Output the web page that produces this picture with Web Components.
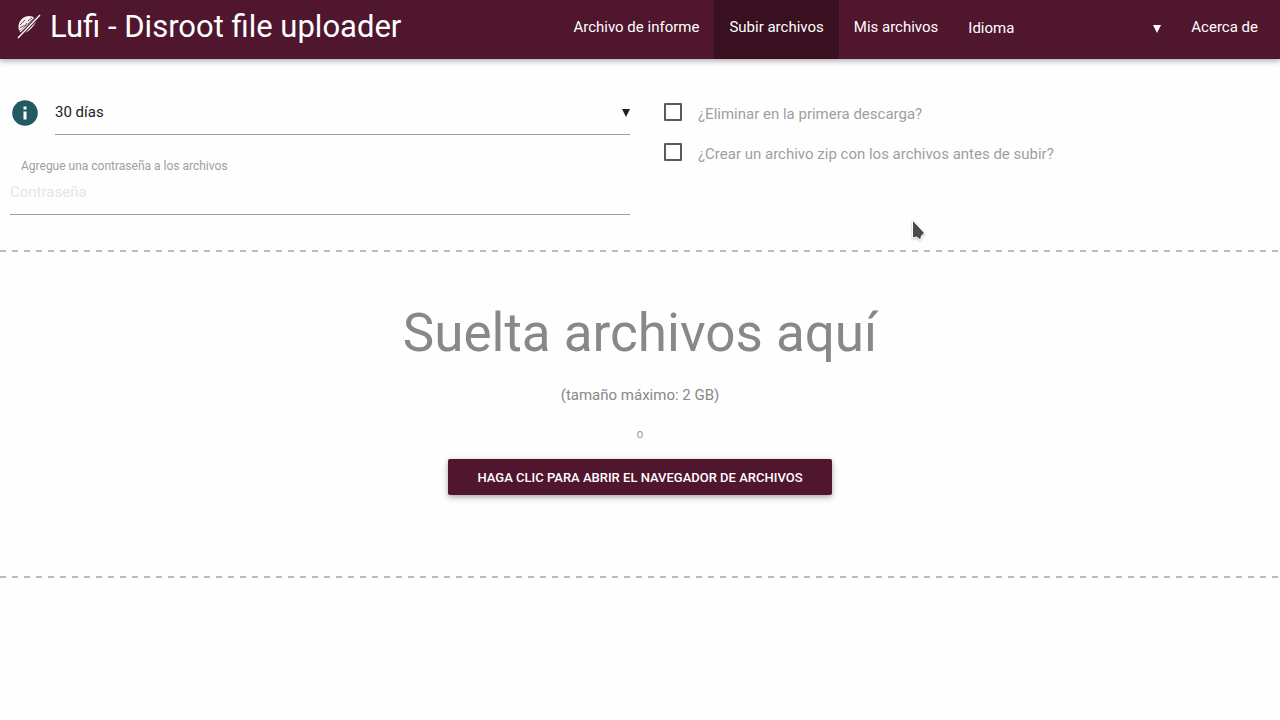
<!DOCTYPE html>
<html lang="es">
<head>
<meta charset="utf-8">
<title>Lufi - Disroot file uploader</title>
<style>
  body { margin: 0; background: #fefefe; color: #212121; font: 15px/22px Roboto, sans-serif; }
</style>
</head>
<body>
<lufi-app></lufi-app>
<script>
const define = (name, html, setup) => customElements.define(name, class extends HTMLElement {
  constructor() {
    super();
    const root = this.attachShadow({ mode: 'open' });
    const template = document.createElement('template');
    template.innerHTML = html;
    root.append(template.content.cloneNode(true));
    if (setup) setup(this, root);
  }
});

define('lufi-logo', `
<style>
  :host { display: block; }
  a { display: flex; align-items: center; gap: 8px; color: #fff; text-decoration: none; font-size: 31px; line-height: 54px; white-space: nowrap; }
  svg { display: block; }
</style>
<a href="#">
  <svg width="26" height="26" viewBox="0 0 26 26" aria-hidden="true">
    <path d="M2.500 14C2 7 7 2 13 2q4 0 5 2L4 17q-1.500-1-1.500-3" fill="#f5eef0"/>
    <path d="M4 11 9 6M4 14l3-2 2 0 2-3M12 7l4-3" fill="none" stroke="#4f162d" stroke-width=".8"/>
    <path d="M4 18 20 4" stroke="#f5eef0" stroke-width="1.200"/>
    <path d="M5 19Q14 13 21 6 16 16 9 19z" fill="#f5eef0"/>
    <path d="M2 24 24 1" stroke="#4f162d" stroke-width="3.500"/>
    <path d="M2 24 24 1" stroke="#fff" stroke-width="1.300"/>
  </svg>
  <slot></slot>
</a>`);

define('nav-link', `
<style>
  :host { display: block; }
  :host([active]) { background: #39101f; }
  a { display: block; padding: 0 15px 5px; line-height: 54px; color: #fff; text-decoration: none; white-space: nowrap; }
</style>
<a href="#"><slot></slot></a>`);

define('select-field', `
<style>
  :host { display: block; }
  div { display: block; position: relative; }
  select { appearance: none; display: block; width: 100%; height: 45px; margin: 0; padding: 0 20px 0 0; border: 0; border-bottom: 1px solid #9e9e9e; border-radius: 0; background: none; color: inherit; font: inherit; outline: 0; }
  :host([plain]) select { border-color: transparent; }
  svg { position: absolute; right: 0; top: 19px; pointer-events: none; }
</style>
<div>
  <select></select>
  <svg width="8" height="8" viewBox="0 0 8 8" aria-hidden="true"><path d="M0 0h8L4 8z" fill="currentColor"/></svg>
</div>`,
(host, root) => {
  const select = root.querySelector('select');
  select.setAttribute('aria-label', host.getAttribute('label'));
  select.add(new Option(host.getAttribute('value')));
});

define('info-icon', `
<style>
  :host { display: block; }
  button { display: block; padding: 0; border: 0; background: none; }
  svg { display: block; }
</style>
<button type="button" aria-label="Información">
  <svg width="26" height="26" viewBox="0 0 26 26"><circle cx="13" cy="13" r="12.8" fill="#215a60"/><path d="M11.5 6.5h3v3h-3zM11.5 11.5h3v8h-3z" fill="#fff"/></svg>
</button>`);

define('password-field', `
<style>
  :host { display: block; }
  label { display: block; padding-left: 11px; font-size: 12px; line-height: 16px; color: #9e9e9e; }
  input { box-sizing: border-box; display: block; width: 100%; height: 41px; margin: 0; padding: 0 0 4px; border: 0; border-bottom: 1px solid #9e9e9e; background: none; font: inherit; outline: 0; }
  input::placeholder { color: #e6e6e6; opacity: 1; }
</style>
<label for="password">Agregue una contraseña a los archivos</label>
<input id="password" type="password" placeholder="Contraseña">`);

define('check-field', `
<style>
  :host { display: block; color: #9e9e9e; }
  label { display: flex; align-items: flex-start; gap: 16px; line-height: 22px; }
  input { appearance: none; box-sizing: border-box; flex: none; width: 18px; height: 18px; margin: 0; border: 2px solid #5a5a5a; border-radius: 1px; }
</style>
<label><input type="checkbox"><span><slot></slot></span></label>`);

define('drop-zone', `
<style>
  :host { display: block; color: #888; text-align: center; }
  .dashes { height: 2px; background: repeating-linear-gradient(90deg, #bbb 0 6px, transparent 6px 12px); }
  .content { display: flex; flex-direction: column; align-items: center; padding: 45px 0 81px; }
  h1 { margin: 0; font-size: 53px; line-height: 72px; font-weight: 400; }
  p { margin: 15px 0 0; }
  small { margin-top: 18px; font-size: 12px; line-height: 20px; color: #9e9e9e; }
  button { height: 36px; margin: 15px 0 0; padding: 1px 29px 0; border: 0; border-radius: 2px; background: #4f162d; color: #fff; font: 500 13px/35px Roboto, sans-serif; text-transform: uppercase; box-shadow: 0 2px 5px rgba(0,0,0,.26), 0 2px 10px rgba(0,0,0,.12); }
</style>
<div class="dashes"></div>
<div class="content">
  <h1>Suelta archivos aquí</h1>
  <p>(tamaño máximo: 2 GB)</p>
  <small>o</small>
  <button type="button">Haga clic para abrir el navegador de archivos</button>
</div>
<div class="dashes"></div>`);

define('mouse-pointer', `
<style>
  :host { display: block; position: absolute; left: 271px; top: 129px; pointer-events: none; }
  svg { display: block; filter: drop-shadow(0 1px 1px rgba(0,0,0,.25)); }
</style>
<svg width="15" height="22" viewBox="0 0 15 22" aria-hidden="true"><path d="M1.5 1v18l4-1 4 3 1-4 3-3z" fill="#4a4a4a" stroke="#fff"/></svg>`);

define('lufi-app', `
<style>
  :host { display: block; }
  header { display: flex; justify-content: space-between; padding: 0 7px 0 16px; background: #4f162d; color: #fff; box-shadow: 0 2px 5px rgba(0,0,0,.26), 0 2px 10px rgba(0,0,0,.08); }
  nav { display: flex; }
  nav select-field { width: 193px; margin: 0 15px; padding-top: 6px; }
  form { display: grid; grid-template-columns: 1fr 1fr; padding: 31px 0 35px; }
  .main { padding: 0 10px; }
  .row { display: grid; grid-template-columns: 30px 1fr; gap: 15px; align-items: center; }
  info-icon { padding-left: 2px; }
  password-field { margin-top: 23px; }
  .options { position: relative; display: flex; flex-direction: column; gap: 18px; padding: 13px 24px 0; }
</style>
<header>
  <lufi-logo>Lufi - Disroot file uploader</lufi-logo>
  <nav>
    <nav-link>Archivo de informe</nav-link>
    <nav-link active>Subir archivos</nav-link>
    <nav-link>Mis archivos</nav-link>
    <select-field plain label="Idioma" value="Idioma"></select-field>
    <nav-link>Acerca de</nav-link>
  </nav>
</header>
<main>
  <form>
    <div class="main">
      <div class="row"><info-icon></info-icon><select-field label="Duración" value="30 días"></select-field></div>
      <password-field></password-field>
    </div>
    <div class="options">
      <check-field>¿Eliminar en la primera descarga?</check-field>
      <check-field>¿Crear un archivo zip con los archivos antes de subir?</check-field>
      <mouse-pointer></mouse-pointer>
    </div>
  </form>
  <drop-zone></drop-zone>
</main>`);
</script>
</body>
</html>
